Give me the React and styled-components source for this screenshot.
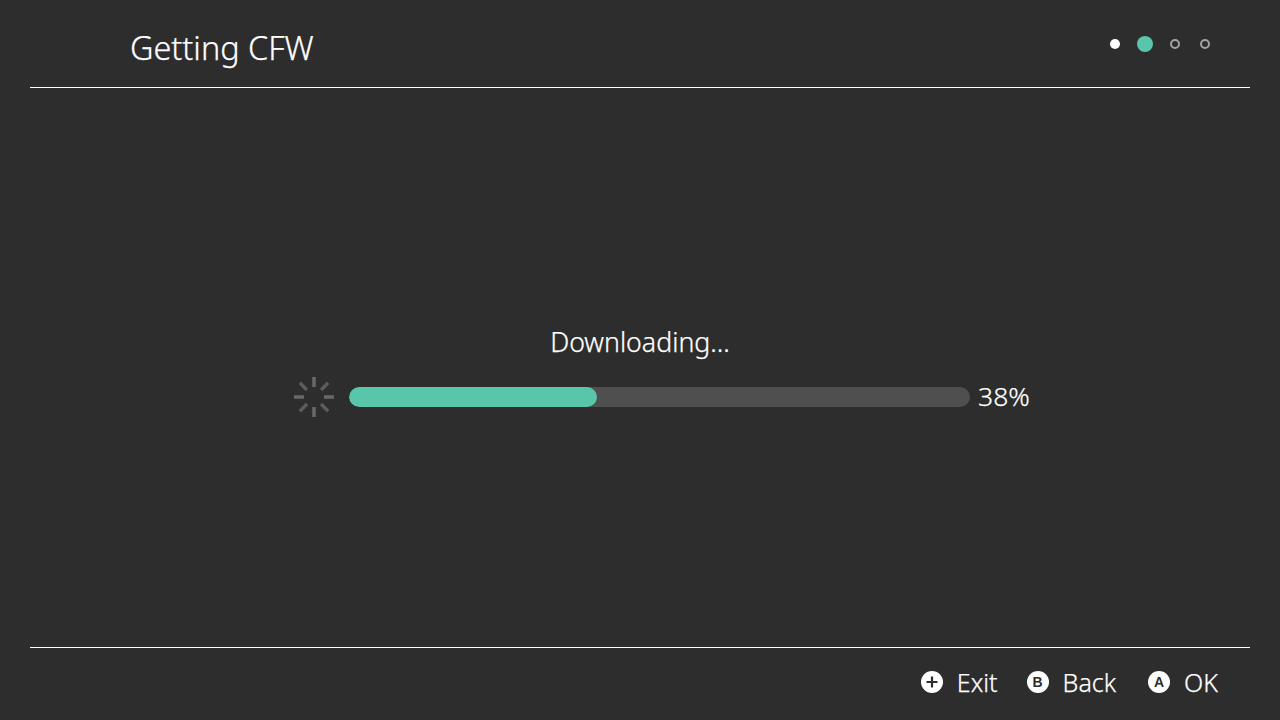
import React from 'react';
import styled, { createGlobalStyle } from 'styled-components';

const GlobalStyle = createGlobalStyle`
  html, body {
    margin: 0;
    padding: 0;
    background-color: #2d2d2d;
  }
`

const Page = styled.div`
  width: 1280px;
  height: 720px;
  box-sizing: border-box;
  padding: 0 30px;
  display: flex;
  flex-direction: column;
  background-color: #2d2d2d;
  color: #ffffff;
  font-family: "Noto Sans", "Open Sans", sans-serif;
  font-weight: 300;
  -webkit-text-stroke: 0.25px #ffffff;
  overflow: hidden;
`

const Header = styled.header`
  height: 87px;
  flex: none;
  display: flex;
  justify-content: space-between;
  border-bottom: 1px solid #ffffff;
  padding: 0 30px 0 100px;
`

const Title = styled.h1`
  margin: 26px 0 0;
  font-size: 32.4px;
  line-height: 42px;
  font-weight: 300;
`

const Steps = styled.div`
  display: flex;
  align-items: center;
  height: 16px;
  margin-top: 36px;
`

const StepSlot = styled.div`
  width: 30px;
  display: flex;
  justify-content: center;
`

const Step = styled.div`
  box-sizing: border-box;
  border-radius: 50%;
  width: ${props => props.kind === 'active' ? '16px' : '10px'};
  height: ${props => props.kind === 'active' ? '16px' : '10px'};
  background-color: ${props => {
    if (props.kind === 'active') {
      return '#59c5aa'
    } else if (props.kind === 'done') {
      return '#ffffff'
    } else {
      return 'transparent'
    }
  }};
  border: ${props => props.kind === 'todo' ? '2px solid #a3a3a3' : 'none'};
`

const Main = styled.main`
  flex: 1;
  display: flex;
  flex-direction: column;
  align-items: center;
  padding-top: 236px;
`

const Status = styled.div`
  font-size: 26.7px;
  line-height: 36px;
  height: 36px;
`

const ProgressRow = styled.div`
  display: flex;
  align-items: center;
  margin-top: 17px;
  width: 736px;
  margin-left: 44px;
  height: 40px;
`

const Spinner = styled.svg`
  width: 40px;
  height: 40px;
  flex: none;
  margin-right: 15px;
`

const Track = styled.div`
  width: 621px;
  height: 20px;
  flex: none;
  border-radius: 10px;
  background-color: #4f4f4f;
  overflow: hidden;
`

const Fill = styled.div`
  height: 100%;
  border-radius: 10px;
  background-color: #59c5aa;
`

const Percent = styled.div`
  margin: 0 0 3px 8px;
  font-size: 26.5px;
  line-height: 34px;
  white-space: nowrap;
`

const Footer = styled.footer`
  height: 73px;
  flex: none;
  box-sizing: border-box;
  display: flex;
  justify-content: flex-end;
  align-items: center;
  border-top: 1px solid #ffffff;
  padding: 0 32px 4px 0;
`

const Action = styled.div`
  display: flex;
  align-items: center;
  margin-left: ${props => props.space}px;
  font-size: 25px;
  line-height: 32px;
`

const ButtonIcon = styled.span`
  width: 22px;
  height: 22px;
  border-radius: 50%;
  background-color: #ffffff;
  color: #2d2d2d;
  -webkit-text-stroke: 0;
  display: flex;
  align-items: center;
  justify-content: center;
  margin-right: 14px;
  font-family: "Liberation Sans", sans-serif;
  font-size: 14px;
  line-height: 22px;
  font-weight: 700;
`

const spokes = [0, 45, 90, 135, 180, 225, 270, 315]

const SpinnerIcon = () => (
  <Spinner viewBox="0 0 40 40">
    {spokes.map(angle => (
      <line
        key={angle}
        x1="20"
        y1="0"
        x2="20"
        y2="10"
        stroke={angle % 90 === 0 ? '#686868' : '#5c5c5c'}
        strokeWidth="3.5"
        transform={`rotate(${angle} 20 20)`}
      />
    ))}
  </Spinner>
)

const PlusIcon = () => (
  <svg width="12" height="12" viewBox="0 0 12 12">
    <path d="M6 0.5v11M0.5 6h11" stroke="#2d2d2d" strokeWidth="2.2" fill="none" />
  </svg>
)

const App = () => {
  const steps = ['done', 'active', 'todo', 'todo']

  return (
    <Page>
      <GlobalStyle />
      <Header>
        <Title>Getting CFW</Title>
        <Steps>
          {steps.map((kind, i) => (
            <StepSlot key={i}><Step kind={kind} /></StepSlot>
          ))}
        </Steps>
      </Header>
      <Main>
        <Status>Downloading...</Status>
        <ProgressRow>
          <SpinnerIcon />
          <Track>
            <Fill style={{ width: '248px' }} />
          </Track>
          <Percent>38%</Percent>
        </ProgressRow>
      </Main>
      <Footer>
        <Action space={0}><ButtonIcon><PlusIcon /></ButtonIcon>Exit</Action>
        <Action space={29}><ButtonIcon>B</ButtonIcon>Back</Action>
        <Action space={32}><ButtonIcon>A</ButtonIcon>OK</Action>
      </Footer>
    </Page>
  )
}

export default App;
